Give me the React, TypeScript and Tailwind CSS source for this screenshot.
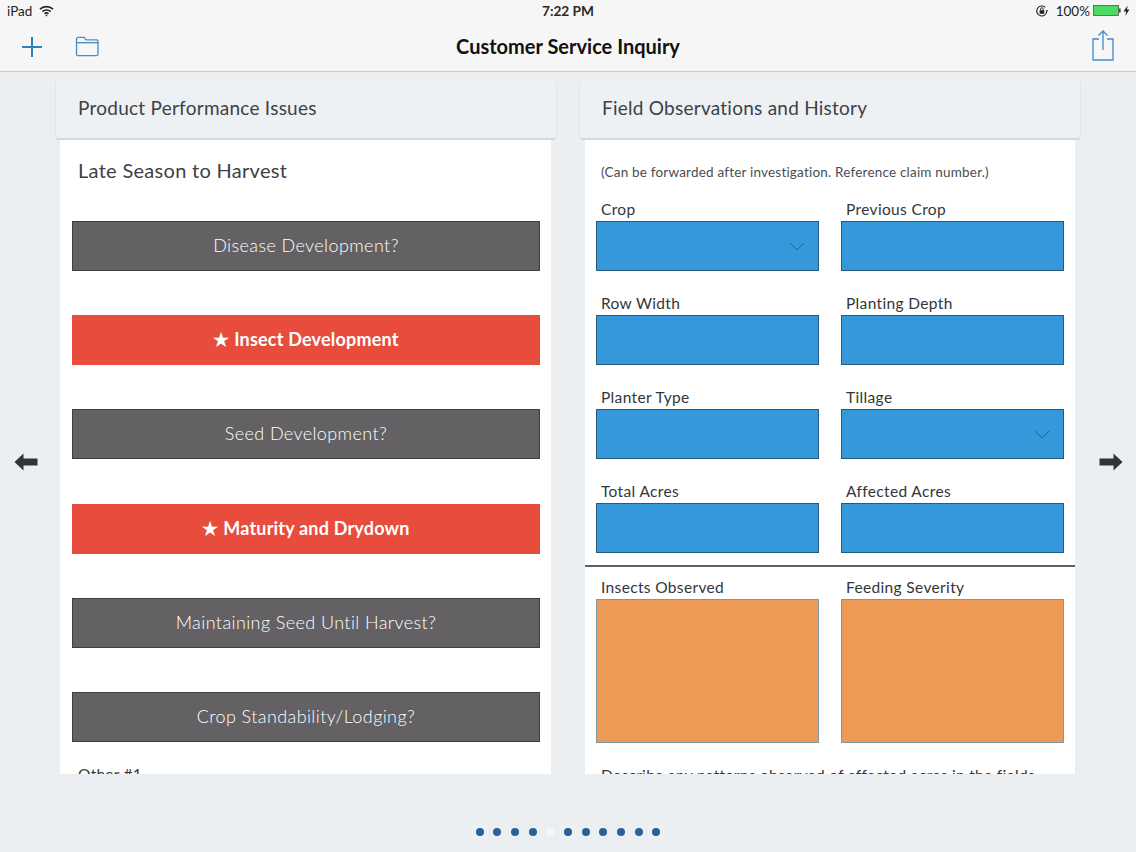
import React from 'react';

const font = { fontFamily: '"Lato", "Liberation Sans", sans-serif' };

const WifiIcon = () => (
  <svg width="15" height="12" viewBox="0 0 15 12" fill="none" stroke="#222" strokeWidth="1.7">
    <path d="M1 4.2a9.4 9.4 0 0 1 13 0" />
    <path d="M3.4 6.6a6 6 0 0 1 8.2 0" />
    <path d="M5.6 8.8a2.8 2.8 0 0 1 3.8 0" />
    <circle cx="7.5" cy="10.6" r="0.8" fill="#222" stroke="none" />
  </svg>
);

const LockIcon = () => (
  <svg width="14" height="14" viewBox="0 0 14 14" fill="none" className="mr-[7px]">
    <path d="M11.8 7a5 5 0 1 1-1.6-3.7" stroke="#222" strokeWidth="1.1" />
    <path d="M10.6 6.2h2.6l-1.3 1.6z" fill="#222" />
    <rect x="4.6" y="6.2" width="4.6" height="3.6" fill="#222" />
    <path d="M5.6 6.2V5a1.3 1.3 0 0 1 2.6 0v1.2" stroke="#222" strokeWidth="0.9" />
  </svg>
);

const BatteryIcon = () => (
  <svg width="37" height="12" viewBox="0 0 37 12" fill="none">
    <rect x="0.5" y="0.5" width="25" height="10" fill="#4cd964" stroke="#555" strokeWidth="0.8" />
    <rect x="26" y="3.5" width="1.6" height="4" fill="#444" />
    <path d="M34.6 0.5 30.6 6.4h2.5l-0.7 4.4 4-6.2h-2.5z" fill="#222" />
  </svg>
);

const PlusIcon = () => (
  <svg width="22" height="22" viewBox="0 0 22 22" stroke="#2d7fbd" strokeWidth="2">
    <path d="M11 1v20M1 11h20" />
  </svg>
);

const FolderIcon = () => (
  <svg width="25" height="21" viewBox="0 0 26 22" fill="none" stroke="#4a8fbe" strokeWidth="1.4">
    <path d="M1.5 19V3a1.5 1.5 0 0 1 1.5-1.500h6.500l2 2.500h11a1.500 1.500 0 0 1 1.500 1.500V19a1.500 1.500 0 0 1-1.500 1.500H3A1.500 1.500 0 0 1 1.500 19z" />
    <path d="M1.500 7h23" />
  </svg>
);

const ShareIcon = () => (
  <svg width="22" height="31" viewBox="0 0 22 31" fill="none" stroke="#3f8ccb" strokeWidth="1.3">
    <path d="M7 9H1v21h20V9h-6" />
    <path d="M11 20V1M6.500 5.500 11 1l4.500 4.500" />
  </svg>
);

const Arrow = ({ flip }: { flip?: boolean }) => (
  <svg width="24" height="18" viewBox="0 0 24 18" fill="#2f3436" className={flip ? 'rotate-180' : ''}>
    <path d="M0.500 9 9.500 0.500V5.500H23.500V12.500H9.500V17.500z" />
  </svg>
);

const Chevron = () => (
  <svg width="16" height="9" viewBox="0 0 16 9" fill="none" stroke="#27608f" strokeWidth="1">
    <path d="M1 1l7 7 7-7" />
  </svg>
);

const ChoiceButton = ({ label, active }: { label: string; active?: boolean }) =>
  active ? (
    <div className="h-[50px] pb-[1px] bg-[#e74c3c] flex items-center justify-center text-white text-[18px] font-bold tracking-[0.2px]">
      ★ {label}
    </div>
  ) : (
    <div className="h-[50px] pb-[1px] bg-[#636163] border border-[#3f3f42] flex items-center justify-center text-white text-[18px] font-light tracking-[0.4px]">
      {label}
    </div>
  );

const Label = ({ text }: { text: string }) => (
  <div className="h-[18px] pl-[5px] text-[15.500px] leading-[12px] text-[#33363a] tracking-[0.35px] whitespace-nowrap">{text}</div>
);

const Field = ({ label, select }: { label: string; select?: boolean }) => (
  <div className="w-[223px] flex flex-col">
    <Label text={label} />
    <div className="h-[50px] bg-[#3498db] border border-[#285a80] flex items-center justify-end pr-[13px]">
      {select && <Chevron />}
    </div>
  </div>
);

const FieldRow = ({ children, mb }: { children: React.ReactNode; mb: string }) => (
  <div className={`flex gap-[22px] ${mb}`}>{children}</div>
);

const ObservedBox = ({ label }: { label: string }) => (
  <div className="w-[223px] flex flex-col">
    <Label text={label} />
    <div className="h-[144px] bg-[#ec9a56] border border-[#7a9aa0]" />
  </div>
);

const PanelHeader = ({ title }: { title: string }) => (
  <div className="h-[58px] pl-[22px] pb-[4px] flex items-center bg-[#edf1f3] rounded-b-[4px] border-b-2 border-x border-b-[#d4d7d9] border-x-[#e2e5e7] text-[19px] text-[#3d4148] tracking-[0.25px]">
    {title}
  </div>
);

const buttons = [
  { label: 'Disease Development?' },
  { label: 'Insect Development', active: true },
  { label: 'Seed Development?' },
  { label: 'Maturity and Drydown', active: true },
  { label: 'Maintaining Seed Until Harvest?' },
  { label: 'Crop Standability/Lodging?' },
];

export default function App() {
  return (
    <div className="w-[1136px] h-[852px] overflow-hidden bg-[#ebeff1] flex flex-col" style={font}>
      {/* status bar + nav */}
      <div className="h-[72px] bg-[#f6f6f7] border-b border-[#c9cccd] flex flex-col shrink-0">
        <div className="h-[22px] pl-[7px] pr-[6px] flex items-center text-[13.500px] text-[#222] relative">
          <span className="mr-[7px]">iPad</span>
          <WifiIcon />
          <span className="absolute left-0 right-0 text-center font-bold text-[13.700px] text-[#2a2a2a]">7:22 PM</span>
          <span className="ml-auto flex items-center">
            <LockIcon />
            <span className="mr-[3px]">100%</span>
            <BatteryIcon />
          </span>
        </div>
        <div className="flex-1 flex items-center pl-[21px] pr-[22px] relative">
          <PlusIcon />
          <span className="ml-[32px]"><FolderIcon /></span>
          <span className="absolute left-0 right-0 pb-[2px] text-center text-[20px] font-bold text-[#111]">Customer Service Inquiry</span>
          <span className="ml-auto -mt-[2px]"><ShareIcon /></span>
        </div>
      </div>

      {/* pages */}
      <div className="flex mt-[10px]">
        <div className="w-[55px] pl-[14px] pt-[371px]"><Arrow /></div>
        <div className="w-[502px] mr-[22px]">
          <PanelHeader title="Product Performance Issues" />
          <div className="mx-[5px] w-[491px] h-[634px] bg-white overflow-hidden pl-[12px] pr-[11px] text-[#33363a]">
            <div className="h-[81px] pl-[6px] pt-[17px] text-[20px] leading-[26px] tracking-[0.3px] text-[#3d4148]">Late Season to Harvest</div>
            <div className="flex flex-col gap-[44.200px]">
              {buttons.map((b) => (
                <ChoiceButton key={b.label} label={b.label} active={b.active} />
              ))}
            </div>
            <div className="pl-[6px] mt-[23px] text-[15.500px] leading-[18px] tracking-[0.25px]">Other #1</div>
          </div>
        </div>
        <div className="w-[502px]">
          <PanelHeader title="Field Observations and History" />
          <div className="mx-[6px] w-[490px] h-[634px] bg-white overflow-hidden text-[#33363a]">
            <div className="pl-[16px] pt-[24px] h-[63px] text-[13.500px] leading-[16px] text-[#4a4d52] tracking-[0.2px] whitespace-nowrap">(Can be forwarded after investigation. Reference claim number.)</div>
            <div className="pl-[11px]">
              <FieldRow mb="mb-[26px]">
                <Field label="Crop" select />
                <Field label="Previous Crop" />
              </FieldRow>
              <FieldRow mb="mb-[26px]">
                <Field label="Row Width" />
                <Field label="Planting Depth" />
              </FieldRow>
              <FieldRow mb="mb-[26px]">
                <Field label="Planter Type" />
                <Field label="Tillage" select />
              </FieldRow>
              <FieldRow mb="mb-[12px]">
                <Field label="Total Acres" />
                <Field label="Affected Acres" />
              </FieldRow>
            </div>
            <div className="h-[2px] bg-[#5e6062]" />
            <div className="pl-[11px] pt-[14px]">
              <FieldRow mb="mb-[23px]">
                <ObservedBox label="Insects Observed" />
                <ObservedBox label="Feeding Severity" />
              </FieldRow>
            </div>
            <div className="pl-[16px] text-[15.500px] leading-[18px] tracking-[0.3px] whitespace-nowrap">Describe any patterns observed of affected acres in the fields</div>
          </div>
        </div>
        <div className="w-[55px] pl-[18px] pt-[371px]"><Arrow flip /></div>
      </div>

      {/* page dots */}
      <div className="flex justify-center gap-[9.700px] mt-[54px]">
        {Array.from({ length: 11 }).map((_, i) => (
          <div key={i} className={`w-[8px] h-[8px] rounded-full ${i === 4 ? 'bg-[#f6f7f8]' : 'bg-[#2a6099]'}`} />
        ))}
      </div>
    </div>
  );
}
